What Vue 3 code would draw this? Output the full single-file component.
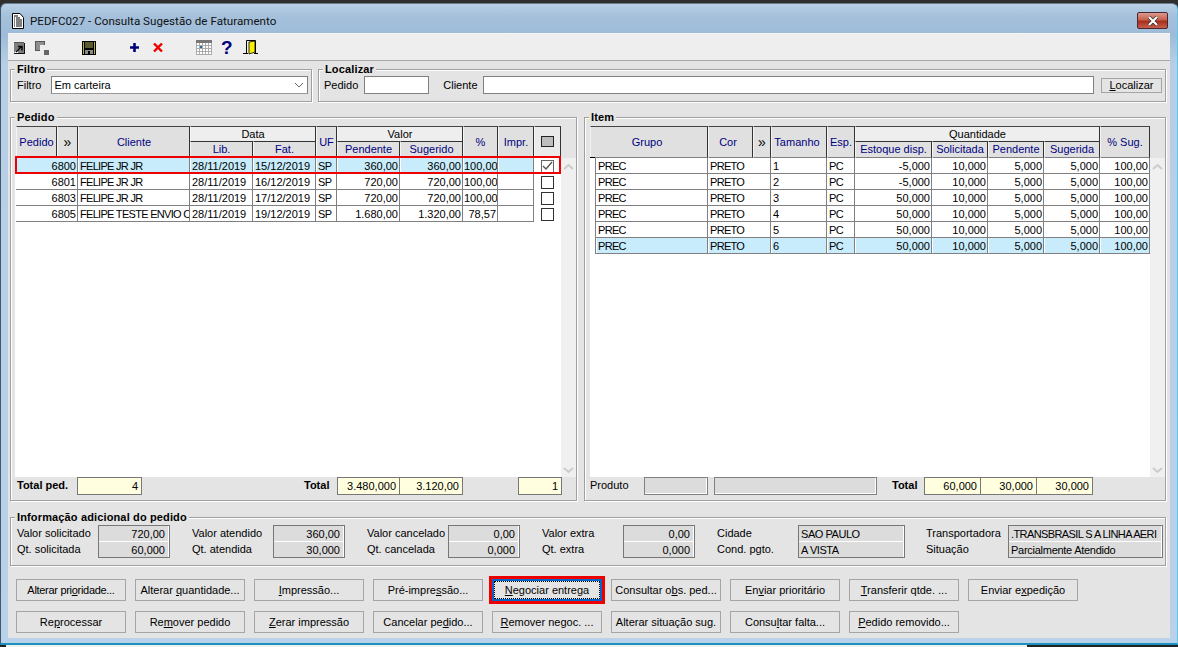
<script setup>
const pedRows = [
  { p: '6800', c: 'FELIPE JR JR', l: '28/11/2019', f: '15/12/2019', pe: '360,00', s: '360,00', pc: '100,00', sel: true, chk: true },
  { p: '6801', c: 'FELIPE JR JR', l: '28/11/2019', f: '16/12/2019', pe: '720,00', s: '720,00', pc: '100,00' },
  { p: '6803', c: 'FELIPE JR JR', l: '28/11/2019', f: '17/12/2019', pe: '720,00', s: '720,00', pc: '100,00' },
  { p: '6805', c: 'FELIPE TESTE ENVIO C', l: '28/11/2019', f: '19/12/2019', pe: '1.680,00', s: '1.320,00', pc: '78,57' }
]
const itemRows = [
  ['1', '-5,000'], ['2', '-5,000'], ['3', '50,000'], ['4', '50,000'], ['5', '50,000'], ['6', '50,000']
]
const row1 = [
  ['Alterar pri', 'o', 'ridade...'], ['Alterar ', 'q', 'uantidade...'], ['', 'I', 'mpressão...'],
  ['Pré-impre', 's', 'são...'], ['', 'N', 'egociar entrega'], ['Consultar o', 'b', 's. ped...'],
  ['En', 'v', 'iar prioritário'], ['', 'T', 'ransferir qtde. ...'], ['Enviar e', 'x', 'pedição']
]
const row2 = [
  ['Re', 'p', 'rocessar'], ['Re', 'm', 'over pedido'], ['', 'Z', 'erar impressão'],
  ['Cancelar pe', 'd', 'ido...'], ['', 'R', 'emover negoc. ...'], ['Alterar situação su', 'g', '.'],
  ['Consu', 'l', 'tar falta...'], ['', 'P', 'edido removido...']
]
const info = [
  { w: 81, a: 'Valor solicitado', av: '720,00', b: 'Qt. solicitada', bv: '60,000', vw: 72 },
  { w: 81, a: 'Valor atendido', av: '360,00', b: 'Qt. atendida', bv: '30,000', vw: 72 },
  { w: 81, a: 'Valor cancelado', av: '0,00', b: 'Qt. cancelada', bv: '0,000', vw: 72 },
  { w: 81, a: 'Valor extra', av: '0,00', b: 'Qt. extra', bv: '0,000', vw: 72 },
  { w: 81, a: 'Cidade', av: 'SAO PAULO', b: 'Cond. pgto.', bv: 'A VISTA', vw: 107, left: true },
  { w: 82, a: 'Transportadora', av: '.TRANSBRASIL S A LINHA AERI', b: 'Situação', bv: 'Parcialmente Atendido', vw: 155, left: true }
]
</script>

<template>
  <div class="desk">
    <div class="win">
      <div class="title">
        <svg class="ti" width="12" height="16" viewBox="0 0 12 16">
          <path d="M.5 .5H8L11.5 4.5V15.5H.5Z" fill="#fff" stroke="#000"/>
          <path d="M2 3h4M2 5h1M4 5h4M2 7h1M4 7h6M2 9h1M4 9h6M2 11h1M4 11h6M2 13h1M4 13h6" stroke="#000"/>
        </svg>
        <span class="ttext">PEDFC027 - Consulta Sugestão de Faturamento</span>
        <div class="close"><svg width="12" height="10" viewBox="0 0 12 10"><path d="M2 1 L10 9 M10 1 L2 9" stroke="#3a2a2a" stroke-width="3.6"/><path d="M2 1 L10 9 M10 1 L2 9" stroke="#fff" stroke-width="2.2"/></svg></div>
      </div>
      <div class="client">
        <div class="toolbar">
          <svg class="tb t1" width="11" height="12" viewBox="0 0 11 12"><rect width="10" height="11" fill="#7d7d7d"/><rect width="10" height="1" y="0" fill="#555"/><rect x="10" y="1" width="1" height="11" fill="#111"/><rect y="11" width="11" height="1" fill="#111"/><path d="M0 11L4 7V11Z" fill="#fff"/><path d="M2 10L7.5 4.5M4 4.5H8V8.5" stroke="#000" stroke-width="1.4" fill="none"/></svg>
          <svg class="tb t2" width="14" height="14" viewBox="0 0 14 14"><rect width="10" height="10" fill="#555"/><rect x="1" y="1" width="8" height="8" fill="#8f8f8f"/><rect x="5" y="4" width="5" height="6" fill="#eee"/><rect x="9" y="9" width="5" height="5" fill="#666"/></svg>
          <svg class="tb t3" width="14" height="14" viewBox="0 0 14 14"><rect width="14" height="14" fill="#000"/><rect x="1" y="1" width="1" height="12" fill="#b5b53c"/><rect x="12" y="1" width="1" height="12" fill="#b5b53c"/><rect x="3" y="1" width="8" height="6" fill="#5a5a2c"/><rect x="3" y="9" width="8" height="4" fill="#8a8a8a"/><rect x="6" y="10" width="2" height="3" fill="#000"/></svg>
          <svg class="tb t4" width="9" height="9" viewBox="0 0 9 9"><path d="M0 4.5H9M4.5 0V9" stroke="#00007f" stroke-width="2.6"/></svg>
          <svg class="tb t5" width="10" height="9" viewBox="0 0 10 9"><path d="M1 .5L9 8.5M9 .5L1 8.5" stroke="#f00000" stroke-width="2.4"/></svg>
          <svg class="tb t6" width="16" height="15" viewBox="0 0 16 15"><rect width="16" height="15" fill="#fff"/><rect width="16" height="3" fill="#777"/><path d="M.5 3V15M3.5 3V15M6.5 3V15M9.5 3V15M12.5 3V15M15.5 3V15M0 5.5H16M0 8.5H16M0 11.5H16M0 14.5H16" stroke="#aaa"/><rect x="4" y="6" width="2" height="2" fill="#1c6fb0"/></svg>
          <span class="q">?</span>
          <svg class="tb t8" width="15" height="15" viewBox="0 0 15 15"><path d="M3.5 13V.5H12.5V13" fill="none" stroke="#000"/><path d="M6 2L12 1V12L6 14Z" fill="#f8f000" stroke="#000" stroke-width=".8"/><path d="M0 13.5H5M11 13.5H15" stroke="#000"/></svg>
        </div>

        <div class="body">
          <div class="toprow">
            <div class="group filtro">
              <span class="legend">Filtro</span>
              <label class="lb">Filtro</label>
              <div class="combo"><span>Em carteira</span><svg width="10" height="6" viewBox="0 0 10 6"><path d="M1 1L5 5L9 1" fill="none" stroke="#666"/></svg></div>
            </div>
            <div class="group localizar">
              <span class="legend">Localizar</span>
              <label class="lb">Pedido</label>
              <div class="inp ped"></div>
              <label class="lb cli">Cliente</label>
              <div class="inp grow"></div>
              <div class="btn loc"><u>L</u>ocalizar</div>
            </div>
          </div>

          <div class="midrow">
            <div class="group panel ped-panel">
              <span class="legend">Pedido</span>
              <div class="gridwrap">
                <div class="tblarea">
                  <div class="tbl pedtbl">
                    <div class="h blue r2 c1">Pedido</div>
                    <div class="h r2 c2 chev">»</div>
                    <div class="h blue r2 c3">Cliente</div>
                    <div class="hg c4-5">Data</div>
                    <div class="h blue r2 c6">UF</div>
                    <div class="hg c7-8">Valor</div>
                    <div class="h blue r2 c9">%</div>
                    <div class="h blue r2 c10">Impr.</div>
                    <div class="h r2 c11"><span class="chkh"></span></div>
                    <div class="h blue sub c4">Lib.</div>
                    <div class="h blue sub c5">Fat.</div>
                    <div class="h blue sub c7">Pendente</div>
                    <div class="h blue sub c8">Sugerido</div>
                    <template v-for="r in pedRows" :key="r.p">
                      <div class="d rt span2" :class="{ sel: r.sel }">{{ r.p }}</div>
                      <div class="d up" :class="{ sel: r.sel }">{{ r.c }}</div>
                      <div class="d" :class="{ sel: r.sel }">{{ r.l }}</div>
                      <div class="d" :class="{ sel: r.sel }">{{ r.f }}</div>
                      <div class="d up" :class="{ sel: r.sel }">SP</div>
                      <div class="d rt" :class="{ sel: r.sel }">{{ r.pe }}</div>
                      <div class="d rt" :class="{ sel: r.sel }">{{ r.s }}</div>
                      <div class="d pct" :class="{ sel: r.sel, rt: r.pc.length < 6 }">{{ r.pc }}</div>
                      <div class="d" :class="{ sel: r.sel }"></div>
                      <div class="chkc"><span class="cb" :class="{ dis: r.chk }"><svg v-if="r.chk" width="11" height="10" viewBox="0 0 11 10"><path d="M1 5L4 8L10 1" fill="none" stroke="#555" stroke-width="1.4"/></svg></span></div>
                    </template>
                  </div>
                  <div class="redrow"></div>
                </div>
                <div class="scroll"><svg width="11" height="7" viewBox="0 0 11 7"><path d="M1 6L5.5 2L10 6" fill="none" stroke="#ccc" stroke-width="2"/></svg><svg width="11" height="7" viewBox="0 0 11 7"><path d="M1 1L5.5 5L10 1" fill="none" stroke="#ccc" stroke-width="2"/></svg></div>
              </div>
              <div class="totals">
                <b class="tl t1l">Total ped.</b>
                <div class="yv w65">4</div>
                <b class="tl t2l">Total</b>
                <div class="yv w64">3.480,000</div>
                <div class="yv w63 nl">3.120,00</div>
                <div class="yv w45">1</div>
              </div>
            </div>

            <div class="group panel item-panel">
              <span class="legend">Item</span>
              <div class="gridwrap">
                <div class="tblarea">
                  <div class="tbl itemtbl">
                    <div class="h blue r2 i1">Grupo</div>
                    <div class="h blue r2 i2">Cor</div>
                    <div class="h r2 i3 chev">»</div>
                    <div class="h blue r2 i4">Tamanho</div>
                    <div class="h blue r2 i5">Esp.</div>
                    <div class="hg i6-9">Quantidade</div>
                    <div class="h blue r2 i10">% Sug.</div>
                    <div class="h blue sub i6">Estoque disp.</div>
                    <div class="h blue sub i7">Solicitada</div>
                    <div class="h blue sub i8">Pendente</div>
                    <div class="h blue sub i9">Sugerida</div>
                    <template v-for="(r, n) in itemRows" :key="r[0]">
                      <div class="gut"></div>
                      <div class="d up" :class="{ sel: n === 5 }">PREC</div>
                      <div class="d up span2" :class="{ sel: n === 5 }">PRETO</div>
                      <div class="d" :class="{ sel: n === 5 }">{{ r[0] }}</div>
                      <div class="d up" :class="{ sel: n === 5 }">PC</div>
                      <div class="d rt" :class="{ sel: n === 5 }">{{ r[1] }}</div>
                      <div class="d rt" :class="{ sel: n === 5 }">10,000</div>
                      <div class="d rt" :class="{ sel: n === 5 }">5,000</div>
                      <div class="d rt" :class="{ sel: n === 5 }">5,000</div>
                      <div class="d rt" :class="{ sel: n === 5 }">100,00</div>
                    </template>
                  </div>
                  <span class="mark"></span>
                </div>
                <div class="scroll"><svg width="11" height="7" viewBox="0 0 11 7"><path d="M1 6L5.5 2L10 6" fill="none" stroke="#ccc" stroke-width="2"/></svg><svg width="11" height="7" viewBox="0 0 11 7"><path d="M1 1L5.5 5L10 1" fill="none" stroke="#ccc" stroke-width="2"/></svg></div>
              </div>
              <div class="totals it">
                <span class="lb prod">Produto</span>
                <div class="gv w65b"></div>
                <div class="gv w178"></div>
                <b class="tl t3l">Total</b>
                <div class="yv w57">60,000</div>
                <div class="yv w56 nl">30,000</div>
                <div class="yv w56 nl">30,000</div>
              </div>
            </div>
          </div>

          <div class="group inforow">
            <span class="legend">Informação adicional do pedido</span>
            <div v-for="c in info" :key="c.a" class="icol">
              <div class="ilabels" :style="{ width: c.w + 'px' }"><span>{{ c.a }}</span><span>{{ c.b }}</span></div>
              <div class="ivals" :class="{ left: c.left }" :style="{ width: c.vw + 'px' }"><div>{{ c.av }}</div><div>{{ c.bv }}</div></div>
            </div>
          </div>

          <div class="btnrow">
            <div v-for="b in row1" :key="b.join('')" class="btn act" :class="{ focus: b[2] === 'egociar entrega' }">
              <span class="in">{{ b[0] }}<u>{{ b[1] }}</u>{{ b[2] }}</span>
            </div>
          </div>
          <div class="btnrow second">
            <div v-for="b in row2" :key="b.join('')" class="btn act"><span class="in">{{ b[0] }}<u>{{ b[1] }}</u>{{ b[2] }}</span></div>
          </div>
        </div>
      </div>
    </div>
  </div>
</template>

<style>
html, body { margin: 0; padding: 0; background: #2f2f2f; }
</style>

<style scoped>
.desk {
  width: 1178px; height: 647px; overflow: hidden;
  background: linear-gradient(90deg, #222 0 6px, #f0f0f0 6px 1027px, #222 1027px);
  font: 11px "Liberation Sans", Arial, sans-serif; color: #000;
  padding-top: 3px; box-sizing: border-box; position: relative;
}
.desk::before { content: ""; position: absolute; left: 0; right: 0; top: 0; height: 8px; background: #2f2f2f; }
.win {
  width: 1178px; height: 642px; box-sizing: border-box; position: relative;
  background: linear-gradient(#b9d1e8 0, #a5c0db 12px, #9ebcd9 31px, #b6cfe6 60px, #b9d1ea 100%);
  border-radius: 6px 6px 0 0; border: 1px solid #44586b; border-top-color: #6b7b8a; border-right-color: #5fc6e8; border-bottom: 2px solid #1a90c0;
  padding: 0 7px 5px 7px;
  display: flex; flex-direction: column;
}
.title { height: 29px; display: flex; align-items: center; position: relative; padding: 5px 0 0 4px; box-sizing: border-box; }
.ti { margin-right: 6px; }
.ttext { font: 11.6px Roboto, sans-serif; color: #111; letter-spacing: .02px; }
.close {
  position: absolute; right: 2px; top: 8px; width: 31px; height: 17px; box-sizing: border-box;
  border: 1px solid #4b2530; border-radius: 2px;
  background: linear-gradient(#d99b8c 0, #c9604e 45%, #a82d1d 55%, #c5604b 100%);
  display: flex; align-items: center; justify-content: center;
}
.client { flex: 1; background: #e4e4e4; display: flex; flex-direction: column; min-height: 0; border-top: 1px solid #f4f4f4; }
.toolbar {
  height: 27px; background: #eeeeee; border-bottom: 1px solid #a8a8a8; padding-top: 1px;
  display: flex; align-items: center; box-sizing: border-box;
}
.t1 { margin-left: 6px; }
.t2 { margin-left: 10px; }
.t3 { margin-left: 33px; }
.t4 { margin-left: 34px; }
.t5 { margin-left: 14px; }
.t6 { margin-left: 33px; }
.t8 { margin-left: 12px; }
.q { font: bold 19px "Liberation Sans", sans-serif; color: #00007f; margin-left: 9px; width: 10px; }
.body { flex: 1; padding: 8px 4px 0 2px; display: flex; flex-direction: column; }

.group { border: 1px solid #a0a0a0; box-shadow: 1px 1px 0 #fff, inset 1px 1px 0 #fff; position: relative; box-sizing: border-box; }
.legend {
  position: absolute; left: 4px; top: -8px; font: bold 11px "Liberation Sans", sans-serif; letter-spacing: .14px;
  background: #e4e4e4; padding: 0 2px; line-height: 14px; white-space: nowrap;
}
.toprow { display: flex; gap: 6px; height: 33px; }
.filtro { width: 302px; display: flex; align-items: center; padding: 0 3px 1px 6px; }
.localizar { flex: 1; display: flex; align-items: center; padding: 0 3px 1px 5px; }
.lb { white-space: nowrap; }
.combo {
  margin-left: 10px; flex: 1; height: 18px; line-height: 16px; background: #fff; border: 1px solid #808080; box-sizing: border-box; border-bottom-color: #999;
  display: flex; align-items: center; justify-content: space-between; padding: 0 3px 0 2px;
}
.inp { height: 18px; background: #fff; border: 1px solid #808080; box-sizing: border-box; }
.ped { width: 65px; margin-left: 6px; }
.cli { margin-left: 14px; margin-right: 5px; }
.grow { flex: 1; }
.btn { border: 1px solid #a5a5a5; background: #e4e4e4; box-sizing: border-box; text-align: center; white-space: nowrap; }
.loc { width: 61px; height: 15px; line-height: 13px; margin-left: 7px; }

.midrow { display: flex; gap: 7px; height: 384px; margin-top: 15px; }
.panel { display: flex; flex-direction: column; }
.ped-panel { width: 567px; }
.item-panel { flex: 1; }
.gridwrap { display: flex; height: 351px; margin-top: 8px; }
.tblarea { position: relative; background: linear-gradient(#e4e4e4 32px, #fff 32px); }
.ped-panel .tblarea { width: 546px; margin-left: 4px; }
.item-panel .tblarea { width: 560px; margin-left: 5px; }
.scroll {
  flex: 1; margin-top: 32px; background: #f0f0f0; display: flex; flex-direction: column; justify-content: space-between; align-items: center; padding: 5px 0 3px; box-sizing: border-box;
}
.tbl { display: grid; grid-auto-rows: 16px; }
.pedtbl { grid-template-columns: 41px 21px 112px 63px 63px 21px 63px 63px 35px 36px 27px; grid-template-rows: 15px 17px; margin-left: 1px; }
.itemtbl { grid-template-columns: 5px 113px 45px 18px 56px 28px 77px 56px 56px 56px 50px; grid-template-rows: 15px 17px; }
.h {
  background: #e0e0e0; display: flex; align-items: center; justify-content: center; box-sizing: border-box; padding-bottom: 1px;
  border-right: 1px solid #333; border-top: 1px solid #444; border-left: 1px solid #f4f4f4; border-bottom: 1px solid #808080; white-space: nowrap;
}
.blue { color: #00007f; }
.r2 { grid-row: 1 / 3; }
.chev { font-size: 14px; }
.sub { border-top: 1px solid #333; }
.hg {
  background: #eeeeee; display: flex; align-items: center; justify-content: center; border-top: 1px solid #444; border-left: 1px solid #f4f4f4;
  border-right: 1px solid #333; box-sizing: border-box;
}
.c1 { grid-column: 1; } .c2 { grid-column: 2; } .c3 { grid-column: 3; }
.c4-5 { grid-column: 4 / 6; grid-row: 1; } .c6 { grid-column: 6; }
.c7-8 { grid-column: 7 / 9; grid-row: 1; } .c9 { grid-column: 9; } .c10 { grid-column: 10; } .c11 { grid-column: 11; background: #eaeaea; padding-right: 1px; }
.c4 { grid-column: 4; grid-row: 2; } .c5 { grid-column: 5; grid-row: 2; }
.c7 { grid-column: 7; grid-row: 2; } .c8 { grid-column: 8; grid-row: 2; }
.i1 { grid-column: 1 / 3; padding-right: 4px; } .i2 { grid-column: 3; padding-right: 5px; } .i3 { grid-column: 4; } .i4 { grid-column: 5; padding-right: 4px; } .i5 { grid-column: 6; }
.i6-9 { grid-column: 7 / 11; grid-row: 1; } .i10 { grid-column: 11; }
.i6 { grid-column: 7; grid-row: 2; } .i7 { grid-column: 8; grid-row: 2; } .i8 { grid-column: 9; grid-row: 2; } .i9 { grid-column: 10; grid-row: 2; }
.chkh { width: 11px; height: 9px; background: #bdbdbd; border: 1px solid #222; }
.d {
  background: #fff; border-right: 1px solid #808080; border-bottom: 1px solid #808080; box-sizing: border-box;
  line-height: 16px; padding: 0 1px 0 2px; white-space: nowrap; overflow: hidden;
}
.up { letter-spacing: -.7px; }
.rt { text-align: right; }
.span2 { grid-column: span 2; }
.pct { padding: 0 1px 0 1px; }
.sel { background: #c8ecfb; box-shadow: inset 1px 0 #fff; }
.gut { background: transparent; }
.itemtbl .gut + .d { border-left: 1px solid #808080; }
.mark { position: absolute; left: 0; top: 31px; width: 5px; height: 1px; background: #000; }
.chkc { display: flex; align-items: center; justify-content: center; background: #fff; padding-right: 1px; }
.cb { width: 13px; height: 13px; border: 1px solid #333; box-sizing: border-box; display: flex; align-items: center; justify-content: center; background: #fff; }
.cb.dis { border-color: #666; }
.redrow {
  position: absolute; left: 0; top: 30px; width: 546px; height: 18px; box-sizing: border-box;
  border: 2px solid #ee0000; pointer-events: none;
}
.totals { display: flex; align-items: center; height: 18px; padding-left: 6px; }
.totals.it { padding-left: 5px; }
.tl { font: bold 11px "Liberation Sans", sans-serif; white-space: nowrap; padding-bottom: 2px; }
.yv { height: 18px; line-height: 17px; background: #ffffe0; border: 1px solid #777; box-sizing: border-box; text-align: right; padding-right: 3px; }
.t1l { width: 60px; }
.w65 { width: 65px; }
.t2l { margin-left: 162px; width: 33px; }
.w64 { width: 63px; }
.w63 { width: 63px; }
.w45 { width: 44px; margin-left: 55px; }
.nl { border-left: 0; }
.prod { width: 54px; padding-bottom: 2px; }
.gv { height: 18px; background: #dcdcdc; border: 1px solid #808080; box-sizing: border-box; box-shadow: inset -1px -1px 0 #fff; }
.w65b { width: 64px; }
.w178 { width: 163px; margin-left: 6px; }
.t3l { margin-left: 15px; width: 32px; }
.w57 { width: 57px; }
.w56 { width: 56px; }
.inforow { height: 49px; margin-top: 16px; display: flex; gap: 22px; padding: 7px 0 0 6px; }
.icol { display: flex; }
.icol:last-child { margin-left: -1px; }
.ilabels { display: flex; flex-direction: column; line-height: 16px; white-space: nowrap; }
.ivals { border: 1px solid #777; box-sizing: border-box; height: 33px; background: #fff; }
.ivals div { height: 15px; background: #dcdcdc; text-align: right; padding-right: 3px; line-height: 17px; overflow: hidden; white-space: nowrap; margin: 0 1px 1px 0; }
.ivals.left div { text-align: left; padding-left: 2px; padding-right: 0; letter-spacing: -.45px; }
.icol:last-child .ivals.left div:first-child { letter-spacing: -.6px; }
.icol:last-child .ivals.left div:last-child { letter-spacing: -.27px; }
.btnrow { display: flex; gap: 9px; margin-top: 13px; padding-left: 6px; height: 22px; }
.second { margin-top: 10px; }
.act { width: 110px; height: 22px; line-height: 20px; position: relative; }
.btnrow:not(.second) .act:first-child { letter-spacing: -.3px; }
.focus { outline: 3px solid #ee0000; border: 2px solid #0a64c8; }
.focus .in { display: block; margin: 0; border: 1px dotted #000; line-height: 16px; height: 16px; }
</style>
